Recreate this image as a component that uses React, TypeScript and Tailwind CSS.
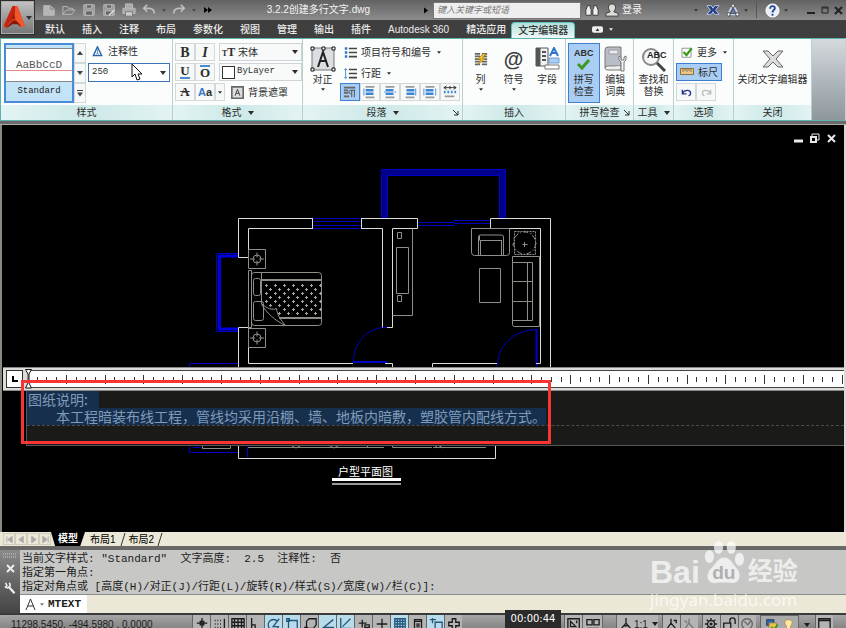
import React from "react";
import clsx from "clsx";

const tabs = [
  "默认",
  "插入",
  "注释",
  "布局",
  "参数化",
  "视图",
  "管理",
  "输出",
  "插件",
  "Autodesk 360",
  "精选应用",
];

interface WithChildren {
  children?: React.ReactNode;
  className?: string;
}

function Caret({ className, small }: { className?: string; small?: boolean }) {
  return (
    <svg
      viewBox="0 0 6 4"
      className={clsx(
        "shrink-0 fill-current",
        small ? "h-[3px] w-[4px]" : "h-[4px] w-[6px]",
        className
      )}
    >
      <path d="M0 0h6L3 4z" />
    </svg>
  );
}

function Icon({
  children,
  className,
  box = "0 0 16 16",
}: WithChildren & { box?: string }) {
  return (
    <svg
      viewBox={box}
      className={clsx("shrink-0", className ?? "h-4 w-4")}
      fill="none"
      stroke="currentColor"
    >
      {children}
    </svg>
  );
}

/* ---------- title bar ---------- */

function Logo() {
  return (
    <button
      aria-label="Application menu"
      className="flex h-[35px] w-[35px] shrink-0 items-center gap-px border border-[#2e2e2e] bg-linear-to-b from-[#c4c4c4] to-[#757575] pl-[3px] shadow-[inset_0_0_0_1px_#aaa]"
    >
      <svg viewBox="0 0 22 26" className="h-[25px] w-[21px]">
        <path d="M9 1h5l8 21-5 1-3-4-5-2-4 2-2 5-4-2z" fill="#e2421c" />
        <path d="M9 1h3l-1 12-5 5-3 6-3-2z" fill="#c42510" />
        <path d="M12 1h2l8 21-5 1-6-10z" fill="#f0572a" />
        <path d="M3 24c3-5 6-8 8-8s5 3 7 7l-4-3H9z" fill="#8c1508" />
        <path d="M10 8l2 6-4 1z" fill="#a31c0c" />
      </svg>
      <Caret className="text-[#333]" />
    </button>
  );
}

function QuickAccess() {
  return (
    <div className="flex items-center gap-[6px] text-[#bdbdbd]">
      <Icon className="h-[14px] w-[14px]">
        <path d="M2 3h8l4 4v7H2z" fill="#b5b5b5" />
        <path d="M10 3v4h4" stroke="#777" />
      </Icon>
      <Icon className="h-[14px] w-[14px]">
        <path d="M1 13V4h5l1 2h5v2M1 13l4-5h10l-4 5z" />
      </Icon>
      <Icon className="h-[14px] w-[14px]">
        <path d="M2 2h12v12H2z" fill="#999" />
        <path d="M5 2h6v4H5zM4 9h8v5H4z" fill="#666" />
      </Icon>
      <Icon className="h-[14px] w-[14px]">
        <path d="M2 2h12v12H2z" fill="#999" />
        <path d="M5 2h6v4H5zM4 9h8v5H4z" fill="#666" />
        <path d="M8 14l6-6" stroke="#ddd" strokeWidth="2" />
      </Icon>
      <Icon className="h-[14px] w-[14px]">
        <path d="M4 6V1h8v5" fill="#aaa" />
        <path d="M1 6h14v6H1z" fill="#aaa" />
        <path d="M4 10h8v5H4z" fill="#ccc" stroke="#777" />
      </Icon>
      <Icon className="h-[14px] w-[14px]">
        <path d="M6 2L2 6l4 4M2 6h6c4 0 6 2 6 6" strokeWidth="2" />
      </Icon>
      <Caret small className="text-[#444]" />
      <Icon className="h-[14px] w-[14px]">
        <path d="M10 2l4 4-4 4M14 6H8c-4 0-6 2-6 6" strokeWidth="2" />
      </Icon>
      <Caret small className="text-[#444]" />
      <svg viewBox="0 0 8 6" className="ml-[2px] h-[6px] w-[8px] fill-black">
        <path d="M0 0l4 3-4 3zM4 0l4 3-4 3z" />
      </svg>
    </div>
  );
}

function TitleBar() {
  return (
    <div className="flex h-[20px] items-center bg-linear-to-b from-[#626262] to-[#8d8d8d] pl-[7px] text-[#333]">
      <QuickAccess />
      <h1 className="ml-auto text-[10px] leading-[18px] text-[#f4f4f4]">
        3.2.2创建多行文字.dwg
      </h1>
      <div className="flex flex-[0_0_476px] items-center">
        <svg
          viewBox="0 0 4 6"
          className="ml-[54px] mr-[5px] h-[7px] w-[4px] fill-black"
        >
          <path d="M0 0l4 3-4 3z" />
        </svg>
        <input
          aria-label="搜索"
          placeholder="键入关键字或短语"
          className="h-[17px] w-[148px] border border-[#777] bg-[#eee] px-[3px] text-[9px] italic leading-[14px] placeholder:text-[#777]"
        />
        <Icon className="ml-1 h-[14px] w-[14px]">
          <path
            d="M3 3h3v3l1 1v7H1V8zM13 3h-3v3L9 7v7h6V8z"
            fill="#eee"
            stroke="#333"
          />
        </Icon>
        <Icon className="ml-[6px] h-[14px] w-[14px]">
          <path
            d="M8 1c3 0 4 2 4 4s-1 4-2 5l5 2v3H1v-3l5-2C5 9 4 7 4 5s1-4 4-4z"
            fill="#ddd"
            stroke="#333"
          />
        </Icon>
        <button className="ml-[3px] text-[10px] leading-[18px] text-[#f4f4f4]">
          登录
        </button>
        <Caret small className="ml-[52px]" />
        <Icon className="ml-2 h-[14px] w-[14px]">
          <path
            d="M1 3h5l2 3 2-3h5l-4 5 4 5h-5l-2-3-2 3H1l4-5z"
            fill="#233f86"
            stroke="#c4d0ee"
          />
        </Icon>
        <Icon className="ml-[6px] h-[14px] w-[14px]">
          <path d="M8 2l6 11H2z" stroke="#c5d0ea" strokeWidth="2" />
          <path d="M8 6l3 6H5z" stroke="#35508f" />
          <circle cx="8" cy="3" r="2" fill="#eee" />
          <circle cx="3" cy="13" r="2" fill="#eee" />
          <circle cx="13" cy="13" r="2" fill="#eee" />
        </Icon>
        <Caret small className="ml-1" />
        <span className="mx-[8px] h-[16px] w-px bg-[#555]" />
        <Icon className="h-[15px] w-[15px]">
          <circle cx="8" cy="8" r="7" fill="#e9eef7" stroke="#fff" />
          <path
            d="M5.500 6c0-4 5-3 5-.5C10.500 7.500 8 7.500 8 10M8 11.500v2"
            stroke="#24488c"
            strokeWidth="2"
          />
        </Icon>
        <Caret small className="ml-1" />
        <Icon className="ml-auto mr-[2px] h-[12px] w-[38px]" box="0 0 38 12">
          <path d="M1 9h8" stroke="#222" strokeWidth="2" />
          <path d="M16 3h6v6h-6zM16 4h6" stroke="#222" />
          <path d="M29 3l7 7M36 3l-7 7" stroke="#222" strokeWidth="2" />
        </Icon>
      </div>
    </div>
  );
}

function TabBar() {
  return (
    <nav className="flex h-[18px] items-end gap-[17px] bg-[#3f3f3f] pl-[10px] text-[10px] font-medium leading-[17px] text-[#ececec]">
      {tabs.map((tab) => (
        <a key={tab} href="#" className="whitespace-nowrap">
          {tab}
        </a>
      ))}
      <a
        href="#"
        aria-current="page"
        className="-ml-[12px] rounded-t-sm border border-b-0 border-[#5fc4bd] bg-linear-to-b from-[#b3dfdb] to-[#eef8f7] px-[6px] leading-[15px] text-[#333]"
      >
        文字编辑器
      </a>
      <button
        aria-label="Minimize ribbon"
        className="flex h-[17px] items-center gap-[6px]"
      >
        <svg viewBox="0 0 12 7" className="h-[7px] w-[11px]">
          <rect width="12" height="7" rx="2" fill="#eee" />
          <path d="M4 5h4L6 2z" fill="#333" />
        </svg>
        <Caret small />
      </button>
    </nav>
  );
}

/* ---------- ribbon ---------- */

interface PanelProps extends WithChildren {
  title: string;
  more?: boolean;
  launcher?: boolean;
}

function Panel({ title, more, launcher, children, className }: PanelProps) {
  return (
    <section
      className={clsx(
        "flex shrink-0 flex-col border-r border-[#b9cfcf]",
        className
      )}
    >
      <div className="flex h-[66px] px-[2px] pt-1">{children}</div>
      <h2 className="relative flex h-[15px] items-center justify-center gap-[6px] bg-linear-to-r from-[#e3f3f3] via-[#cde9e8] to-[#e3f3f3] leading-[14px]">
        {title}
        {more && <Caret />}
        {launcher && (
          <Icon className="absolute right-[3px] h-[6px] w-[6px]" box="0 0 6 6">
            <path d="M0 0l5 5M5 1v4H1" />
          </Icon>
        )}
      </h2>
    </section>
  );
}

function ToolButton({
  children,
  label,
  active,
  className,
}: WithChildren & { label: string; active?: boolean }) {
  return (
    <button
      aria-label={label}
      className={clsx(
        "flex items-center justify-center border",
        active
          ? "border-[#3f7fd0] bg-[#a9cdf3]"
          : "border-[#d3d8da] bg-[#f7f8f8]",
        className ?? "h-[18px] w-[20px]"
      )}
    >
      {children}
    </button>
  );
}

function BigButton({
  icon,
  lines,
  caret,
  active,
  className,
}: {
  icon: React.ReactNode;
  lines: string[];
  caret?: boolean;
  active?: boolean;
  className?: string;
}) {
  return (
    <button
      className={clsx(
        "flex h-[60px] flex-col items-center border leading-[12px]",
        active ? "border-[#3f7fd0] bg-[#a9cdf3]" : "border-transparent",
        className
      )}
    >
      <span className="flex h-[30px] items-center">{icon}</span>
      {lines.map((line) => (
        <span key={line} className="whitespace-nowrap">
          {line}
        </span>
      ))}
      {caret && <Caret small className="mt-[2px]" />}
    </button>
  );
}

function StylePanel() {
  return (
    <Panel title="样式" className="w-[172px]">
      <button className="ml-px flex h-[60px] w-[70px] flex-col border-2 border-[#4a8bd6] bg-[#c3e3f7] font-['Liberation_Mono',monospace]">
        <span className="mt-[3px] flex h-[34px] w-full items-center justify-center border-y border-[#888] bg-linear-to-b from-white from-65% via-[#e58080] via-67% to-white to-70% text-[11px] text-[#555]">
          AaBbCcD
        </span>
        <span className="w-full text-center text-[9px] leading-[19px] text-[#222]">
          Standard
        </span>
      </button>
      <div className="mr-[3px] flex w-[12px] flex-col text-[#444]">
        <ToolButton label="上一样式" className="h-[20px]">
          <Caret className="rotate-180" />
        </ToolButton>
        <ToolButton label="下一样式" className="h-[20px]">
          <Caret />
        </ToolButton>
        <ToolButton label="全部样式" className="h-[20px]">
          <Icon className="h-[7px] w-[6px]" box="0 0 6 7">
            <path d="M0 .5h6" />
            <path d="M0 2.500h6l-3 4z" fill="currentColor" stroke="none" />
          </Icon>
        </ToolButton>
      </div>
      <div className="relative -ml-px flex flex-1 flex-col">
        <button className="flex h-[20px] items-center gap-[5px] pb-[4px] pl-1">
          <Icon className="h-[11px] w-[11px]">
            <path d="M8 1l6 13H2z" stroke="#2a62ad" strokeWidth="2" />
            <path d="M8 5v5l-3 4M8 10l3 4" stroke="#2a62ad" />
          </Icon>
          注释性
        </button>
        <select
          aria-label="文字高度"
          className="h-[19px] w-full appearance-none border border-[#3c74b8] bg-white pl-[3px] font-['Liberation_Mono',monospace] text-[9px]"
        >
          <option>250</option>
        </select>
        <Caret className="pointer-events-none absolute right-1 top-[28px] text-[#333]" />
        <svg
          viewBox="0 0 11 18"
          className="pointer-events-none absolute left-[43px] top-[20px] h-[18px] w-[11px]"
        >
          <path d="M1 1v13l3-3 2 6 3-1-2-5h4z" fill="#fff" stroke="#111" />
        </svg>
      </div>
    </Panel>
  );
}

function SelectBox({
  label,
  value,
  icon,
  mono,
}: {
  label: string;
  value: string;
  icon: React.ReactNode;
  mono?: boolean;
}) {
  return (
    <label className="relative flex h-[18px] w-[83px] items-center gap-[2px] border border-[#cdd3d6] bg-[#f8f9f9] pl-[2px]">
      {icon}
      <select
        aria-label={label}
        className={clsx(
          "w-full appearance-none",
          mono && "font-['Liberation_Mono',monospace] text-[9px]"
        )}
      >
        <option>{value}</option>
      </select>
      <Caret className="pointer-events-none absolute right-[3px]" />
    </label>
  );
}

function FormatPanel() {
  return (
    <Panel title="格式" more className="w-[130px]">
      <div className="flex flex-col gap-[2px] font-['Liberation_Serif','Noto_Sans_CJK_SC',serif]">
        <div className="flex">
          <ToolButton label="粗体">
            <b className="text-[14px]">B</b>
          </ToolButton>
          <ToolButton label="斜体">
            <i className="text-[14px] font-bold">I</i>
          </ToolButton>
          <span className="w-1" />
          <SelectBox
            label="字体"
            value="宋体"
            icon={
              <span className="flex w-[14px] shrink-0 items-baseline">
                <b className="text-[8px]">T</b>
                <b className="text-[12px]">T</b>
              </span>
            }
          />
        </div>
        <div className="flex">
          <ToolButton label="下划线">
            <span className="border-b-2 border-[#4a8bd6] text-[13px] font-bold leading-[12px]">
              U
            </span>
          </ToolButton>
          <ToolButton label="上划线">
            <span className="border-t-2 border-[#4a8bd6] text-[13px] font-bold leading-[12px]">
              O
            </span>
          </ToolButton>
          <span className="w-1" />
          <SelectBox
            label="颜色"
            value="ByLayer"
            mono
            icon={
              <span className="h-[13px] w-[13px] shrink-0 border border-[#333] bg-white" />
            }
          />
        </div>
        <div className="flex">
          <ToolButton label="删除线">
            <span className="text-[13px] font-bold leading-[12px] line-through">
              A
            </span>
          </ToolButton>
          <ToolButton label="大小写">
            <b className="font-['Liberation_Sans',sans-serif] text-[11px]">
              <span className="text-[#2f78c8]">A</span>a
            </b>
          </ToolButton>
          <ToolButton label="大小写选项" className="h-[18px] w-[10px]">
            <Caret small />
          </ToolButton>
          <button className="ml-[6px] flex items-center gap-[4px]">
            <Icon className="h-[13px] w-[13px]">
              <path d="M1 1h14v14H1z" fill="#ddd" stroke="#666" strokeWidth="2" />
              <path d="M5 12l3-8 3 8M6 9h4" />
            </Icon>
            背景遮罩
          </button>
        </div>
      </div>
    </Panel>
  );
}

function AlignIcon({ accent, left = 3 }: { accent: string; left?: number }) {
  return (
    <Icon className="h-[14px] w-[14px]">
      <path d="M3 2h10M3 14h10" stroke="#999" strokeWidth="2" />
      <path d={`M${left} 6h9M${left} 10h9`} stroke="#3c86d6" strokeWidth="3" />
      <path d={accent} stroke="#3c86d6" />
    </Icon>
  );
}

function ListIcon({ children }: WithChildren) {
  return (
    <Icon className="h-[13px] w-[13px]">
      <path d="M6 3h10M6 8h10M6 13h10" stroke="#444" strokeWidth="2" />
      {children}
    </Icon>
  );
}

function ParagraphPanel() {
  return (
    <Panel title="段落" more launcher className="w-[160px]">
      <BigButton
        caret
        className="w-[36px]"
        lines={["对正"]}
        icon={
          <Icon className="h-[26px] w-[26px]" box="0 0 26 26">
            <path d="M2 2h22v22H2z" fill="#dcdfe1" stroke="#777" />
            <path
              d="M8 21l5-15 5 15M10 15h7"
              strokeWidth="2"
              stroke="#222"
            />
            <path
              d="M1 1h3v3H1zM12 1h3v3h-3zM22 1h3v3h-3zM1 22h3v3H1zM22 22h3v3h-3z"
              fill="#fff"
              stroke="#111"
            />
          </Icon>
        }
      />
      <div className="flex flex-col">
        <button className="flex h-[20px] items-center gap-1 whitespace-nowrap pb-[2px] pl-1">
          <ListIcon>
            <path d="M1 3h3M1 8h3M1 13h3" stroke="#2a76c8" strokeWidth="3" />
          </ListIcon>
          项目符号和编号
          <Caret small className="ml-[2px]" />
        </button>
        <button className="flex h-[20px] items-center gap-1 pl-1">
          <ListIcon>
            <path d="M2 2v12M0 4l2-2 2 2M0 12l2 2 2-2" stroke="#2a76c8" />
          </ListIcon>
          行距
          <Caret small className="ml-[2px]" />
        </button>
        <div className="flex">
          <ToolButton label="默认对正" active>
            <Icon className="h-[14px] w-[14px]">
              <path
                d="M1 3h13M1 6h5M1 9h5M1 13h6"
                stroke="#666"
                strokeWidth="2"
              />
              <path d="M10 14V6M13 14V6M14 6h-5c-3 0-3 4 0 4" stroke="#444" />
            </Icon>
          </ToolButton>
          <ToolButton label="左对齐">
            <AlignIcon accent="M1 4v8" />
          </ToolButton>
          <ToolButton label="居中">
            <AlignIcon accent="M1 8h2M13 8h2" />
          </ToolButton>
          <ToolButton label="右对齐">
            <AlignIcon accent="M14.500 4v8" left={4} />
          </ToolButton>
          <ToolButton label="对正段落">
            <AlignIcon accent="M1 4v8M14.500 4v8" />
          </ToolButton>
          <ToolButton label="分布">
            <Icon className="h-[14px] w-[14px]">
              <path d="M1 3h14M4 1L1 3l3 2M12 1l3 2-3 2M8 1v4" stroke="#222" />
              <path
                d="M1 8h2M5 8h2M9 8h2M13 8h2"
                stroke="#3c86d6"
                strokeWidth="3"
              />
              <path d="M2 13h11" stroke="#999" strokeWidth="2" />
            </Icon>
          </ToolButton>
        </div>
      </div>
    </Panel>
  );
}

function InsertPanel() {
  return (
    <Panel title="插入" className="w-[103px]">
      <BigButton
        caret
        className="w-[31px]"
        lines={["列"]}
        icon={
          <Icon className="h-[16px] w-[14px]">
            <path
              d="M1 2h6M1 5h6M1 8h6M1 11h6M1 14h6M9 2h6M9 5h6M9 8h6M9 11h6M9 14h6"
              stroke="#666"
              strokeWidth="2"
            />
            <path
              d="M11 2l-7 6h4l-3 6 8-7H9l4-4z"
              fill="#f4c724"
              stroke="#b58a1a"
            />
          </Icon>
        }
      />
      <BigButton
        caret
        className="w-[35px]"
        lines={["符号"]}
        icon={<b className="text-[20px] text-[#3c3c3c]">@</b>}
      />
      <BigButton
        className="w-[32px]"
        lines={["字段"]}
        icon={
          <Icon className="h-[24px] w-[25px]" box="0 0 25 24">
            <path d="M1 1h4v18H1z" fill="#555" stroke="#555" />
            <path d="M5 1h8v18H5z" fill="#f1f2f3" stroke="#555" />
            <path d="M7 5h4M7 9h4M7 13h4" stroke="#555" strokeWidth="2" />
            <path
              d="M15 9l4-8 4 8M16 6h6"
              stroke="#2f78c8"
              strokeWidth="2"
            />
            <path d="M14 11h10v5H14z" fill="#a9cdf3" stroke="#6f9ecf" />
            <path d="M10 18h14v4H10z" fill="#fff" stroke="#777" />
          </Icon>
        }
      />
    </Panel>
  );
}

function RibbonEnd() {
  return (
    <>
      <Panel title="拼写检查" launcher className="w-[68px]">
        <BigButton
          active
          className="w-[32px]"
          lines={["拼写", "检查"]}
          icon={
            <span className="flex flex-col items-center">
              <b className="text-[9px] leading-[10px]">ABC</b>
              <Icon className="h-[13px] w-[15px]" box="0 0 15 13">
                <path d="M2 6l4 4 7-8" stroke="#3c9a22" strokeWidth="3" />
              </Icon>
            </span>
          }
        />
        <BigButton
          className="w-[32px]"
          lines={["编辑", "词典"]}
          icon={
            <Icon className="h-[26px] w-[23px]" box="0 0 23 26">
              <path
                d="M4 1h13v19H4q-3 0-3 2V4q0-3 3-3z"
                fill="#b9bdc5"
                stroke="#777"
              />
              <path d="M1 22q0 2 3 2h13v-4" fill="#eee" stroke="#777" />
              <path d="M5 4h9v4H5z" fill="#e6e9f0" stroke="#999" />
              <path
                d="M15 10v4l2 2v9h3v-9l2-2v-4l-2 1v3h-3v-3z"
                fill="#f2f2f2"
                stroke="#777"
              />
            </Icon>
          }
        />
      </Panel>
      <Panel title="工具" more className="w-[40px]">
        <BigButton
          className="w-[35px]"
          lines={["查找和", "替换"]}
          icon={
            <Icon className="h-[26px] w-[26px]" box="0 0 26 26">
              <circle
                cx="10"
                cy="11"
                r="8"
                fill="#f4f6f8"
                stroke="#888"
                strokeWidth="2"
              />
              <path d="M16 17l8 8" stroke="#444" strokeWidth="3" />
              <text
                x="6"
                y="12"
                fontSize="9"
                fontWeight="bold"
                fill="#222"
                stroke="none"
              >
                ABC
              </text>
            </Icon>
          }
        />
      </Panel>
      <Panel title="选项" className="w-[60px]">
        <div className="flex flex-col items-start">
          <button className="flex h-[20px] items-center gap-1 whitespace-nowrap pb-[2px] pl-1">
            <Icon className="h-[12px] w-[13px]">
              <path d="M2 3h12v12H2z" fill="#fff" stroke="#777" />
              <path d="M4 8l4 4 7-9" stroke="#3c9a22" strokeWidth="3" />
            </Icon>
            更多
            <Caret small className="ml-[2px]" />
          </button>
          <button className="flex h-[18px] items-center gap-1 border border-[#3f7fd0] bg-[#a9cdf3] px-[3px]">
            <Icon className="h-[8px] w-[14px]" box="0 0 14 8">
              <path d="M.5 .5h13v6H.5z" fill="#e9c98b" stroke="#8b7040" />
              <path d="M3 1v3M5 1v2M7 1v3M9 1v2M11 1v3" stroke="#8b7040" />
            </Icon>
            标尺
          </button>
          <div className="mt-[2px] flex">
            <ToolButton label="放弃">
              <Icon className="h-[11px] w-[11px]">
                <path
                  d="M2 4v6h6M2 9c4-6 12-5 12 0 0 2-1 3-3 4"
                  stroke="#27328f"
                  strokeWidth="2"
                />
              </Icon>
            </ToolButton>
            <ToolButton label="重做">
              <Icon className="h-[11px] w-[11px]">
                <path
                  d="M14 4v6H8M14 9C10 3 2 4 2 9c0 2 1 3 3 4"
                  stroke="#bbb"
                  strokeWidth="2"
                />
              </Icon>
            </ToolButton>
          </div>
        </div>
      </Panel>
      <Panel title="关闭" className="w-[78px]">
        <BigButton
          className="w-full"
          lines={["关闭文字编辑器"]}
          icon={
            <Icon className="h-[18px] w-[22px]" box="0 0 22 18">
              <path
                d="M1 1h5l5 5 5-5h5l-7 8 7 8h-5l-5-5-5 5H1l7-8z"
                fill="#ddd"
                stroke="#666"
              />
            </Icon>
          }
        />
      </Panel>
    </>
  );
}

function Ribbon() {
  return (
    <div className="flex border border-y-[#5fb3ae] border-l-[#5fb3ae] border-r-[#ccc] bg-[#fbfdfd] text-[10px] text-[#2d2d2d]">
      <StylePanel />
      <FormatPanel />
      <ParagraphPanel />
      <InsertPanel />
      <RibbonEnd />
      <div className="flex-1 bg-linear-to-b from-[#d5dade] to-[#8e979d]" />
    </div>
  );
}

/* ---------- drawing area ---------- */

function bedPattern() {
  let d = "";
  for (let row = 0; row < 8; row++) {
    for (let col = 0; col < 7; col++) {
      const x = 266 + col * 9 + (row % 2 ? 4 : 0);
      const y = 285 + row * 4;
      if (x > 320 || (x < 278 && y > 306)) continue;
      d += `M${x - 1} ${y + 0.5}h3M${x + 0.5} ${y - 1}v3`;
    }
  }
  return d;
}

function Nightstand({ y }: { y: number }) {
  return (
    <g>
      <path d={`M248.500 ${y}h17v19h-17z`} />
      <circle cx="257" cy={y + 9.5} r="4" />
      <path
        d={`M250 ${y + 9.5}h5M259 ${y + 9.5}h5M257 ${y + 3}v5M257 ${y + 11}v5`}
      />
    </g>
  );
}

function FloorPlan() {
  return (
    <svg
      viewBox="0 125 846 407"
      className="h-[407px] w-[846px] max-w-none"
      fill="none"
      aria-label="户型平面图"
    >
      {/* windows, balcony and doors */}
      <g stroke="#0000c8">
        <path
          d="M384.500 218V172.500H502.500V218"
          stroke="#00008c"
          strokeWidth="6"
        />
        <path d="M381.500 218V169.500H505.500V218M387.500 218V175.500H499.500V218" />
        <path d="M312 218.500h50M312 221.500h50M312 225.500h50M312 228.500h50" />
        <path d="M417 222.500h37v-2h37M417 225.500h37v-2h37" />
        <path d="M238 253.500H216.500V331.500H238" />
        <path
          d="M238 256H219.500V329H238"
          strokeWidth="3"
          stroke="#0000e0"
        />
        <path d="M353.500 363c0-20 12-33 29-35.500h6M353 361.500h34" />
        <path d="M353 362h34" strokeWidth="2" />
        <path d="M497.500 366c0-20 15-36 40-36.500" />
        <path d="M536.500 330v36" strokeWidth="2" />
        <path d="M189.500 367v-3.500H238M189.500 445v7.500H238M193 447.500h8M247.500 446v12" />
      </g>
      {/* walls */}
      <g stroke="#dcdcd4">
        <path d="M312.500 218.500H238.500V257.500H248.500V228.500H312.500M361.500 218.500H417.500V228.500H392.500V327.500H387" />
        <path d="M361.500 228.500H382.500V327.500M312.500 218v11M361.500 218v11" />
        <path d="M490.500 218.500v10H540.500V363.500H536M490.500 218.500H550.500V367" />
        <path d="M238.500 367V327.500H248.500V363.500H353M385 363.500h7.500v4M432.500 367v-3.500H497" />
        <path d="M238.500 446V458.500H495.500V446" />
        <path
          d="M248 447.500H384M392.500 446v1.500H432M433 447.500h53"
          stroke="#8a8a84"
        />
        <path d="M202.500 446v2.500h28v-2.500" stroke="#8a8a84" />
        <path
          d="M292 446l4 2 4-2M330 446l4 2 4-2M367.500 446v2M434 448l4-3 5 3"
          stroke="#8a8a84"
        />
      </g>
      {/* furniture */}
      <g stroke="#8f8f89">
        <Nightstand y={249.5} />
        <Nightstand y={328.5} />
        <path d="M248.500 270.500h3v57h-3z" />
        <rect x="251.500" y="272.500" width="70" height="53" rx="3" />
        <path d="M262 280h60M279 318h43" strokeWidth="2" />
        <rect x="253.500" y="278.500" width="7" height="17" rx="2" />
        <rect x="253.500" y="301.500" width="10" height="19" rx="2" />
        <path d="M261.500 273v31c4 8 14 17 24 21.500-4-5-8-9-9-17-4 2-10 0-15-5" />
        <path d={bedPattern()} stroke="#a5a59f" />
        <path d="M392.500 315.500h20v-87M396.500 247.500h12v46h-12zM397.500 232.500h4v6h-4zM397.500 295.500h4v6h-4z" />
        <path d="M479.500 268.500h21v34h-21z" />
        <path d="M471.500 228.500h38v24q0 3-3 3h-32q-3 0-3-3z" />
        <path d="M478.500 255v-18q0-2 2-2h21q2 0 2 2v18M480 240.500h22M479.500 235.500v5M501.500 240.500v15M480.500 240.500v15" />
        <path d="M512.500 256.500h27v70h-25q-2 0-2-2zM512.500 262.500h20v58h-20M527.500 262.500v58M512.500 281.500h20M512.500 301.500h20" />
        <path d="M514.500 231.500h21v23h-21z" strokeDasharray="2 1" />
        <circle cx="524.500" cy="243" r="11" strokeDasharray="5 2 1 2" />
        <circle cx="524.500" cy="243" r="12" strokeDasharray="1 6" />
        <path d="M522.500 244.500h5M524.500 242v5" />
      </g>
      <text
        x="338"
        y="476"
        fontSize="11"
        fill="#fff"
        fontFamily="'Noto Sans CJK SC', sans-serif"
      >
        户型平面图
      </text>
      <path d="M332 479.500h69" stroke="#fff" strokeWidth="3" />
      <path d="M332 484h69" stroke="#999" strokeWidth="2" />
    </svg>
  );
}

function rulerTicks() {
  let d = "";
  for (let i = 1; i < 200; i++) {
    const x = Math.round(i * 9.7);
    d += i % 4 === 0 ? `M${x + 0.5} 4v9` : `M${x + 0.5} 6v5`;
  }
  return d;
}

function TextEditor() {
  return (
    <div className="relative">
      <div className="flex h-[24px] items-center border-y border-[#888] bg-[#dcdcd8] pl-[3px]">
        <div className="flex h-[18px] w-[17px] items-center justify-center border border-[#333] bg-white">
          <Icon className="h-[6px] w-[6px]" box="0 0 6 6">
            <path d="M1 0v5h5" stroke="#000" strokeWidth="2" />
          </Icon>
        </div>
        <div className="ml-[4px] h-[18px] min-w-0 flex-1 overflow-hidden border-y border-[#444] bg-white">
          <svg className="h-[16px] w-full" stroke="#333">
            <path d={rulerTicks()} />
          </svg>
        </div>
      </div>
      <div
        role="textbox"
        aria-label="多行文字"
        className="ml-[23px] flex h-[55px] flex-col items-start border-b border-l border-[#555] bg-[#1a1a19] font-['Noto_Sans_CJK_SC',sans-serif] text-[14px] leading-[17px] text-[#7f9bbb]"
      >
        <span className="w-[72px] bg-[#162f4c] pl-px">图纸说明:</span>
        <div className="w-full border-b border-dashed border-[#4c4c4c]">
          <span className="inline-block whitespace-nowrap bg-[#162f4c] pl-[29px] align-top">
            本工程暗装布线工程，管线均采用沿棚、墙、地板内暗敷，塑胶管内配线方式。
          </span>
        </div>
      </div>
      <svg
        viewBox="0 0 7 20"
        className="absolute left-[22px] top-[2px] h-[20px] w-[7px]"
        fill="#fff"
        stroke="#111"
      >
        <path d="M.5 .5h6L4 5v9l2.500 5h-6L3 14V5z" />
      </svg>
    </div>
  );
}

function Canvas() {
  return (
    <main className="relative min-h-[407px] flex-1 overflow-hidden border-l-2 border-r-2 border-l-[#8a8a82] border-r-[#d8d8d8] bg-black">
      <div className="absolute -left-[2px] top-0">
        <FloorPlan />
      </div>
      <Icon
        className="absolute right-2 top-[8px] h-[11px] w-[43px] text-[#e8e8e8]"
        box="0 0 43 11"
      >
        <path d="M1 8h9" strokeWidth="3" />
        <path d="M19 3V1h7v6h-2" />
        <path d="M18 4h5v5h-5z" strokeWidth="2" />
        <path d="M35 2l7 7M42 2l-7 7" strokeWidth="2" />
      </Icon>
      <div className="absolute left-px right-0 top-[242px]">
        <TextEditor />
      </div>
      <div className="absolute left-[19px] top-[255px] h-[64px] w-[530px] border-3 border-[#f93434]" />
    </main>
  );
}

/* ---------- command line and status bar ---------- */

const scrollArrows = [
  { name: "首个布局", d: "M2 1v7M8 1v7L3 4.500z" },
  { name: "上一布局", d: "M7 1v7L2 4.500z" },
  { name: "下一布局", d: "M3 1v7l5-3.500z" },
  { name: "末个布局", d: "M8 1v7M2 1v7l5-3.500z" },
];

function Slash() {
  return (
    <svg viewBox="0 0 6 13" className="h-[13px] w-[6px]" stroke="#333">
      <path d="M1 13L5 0" />
    </svg>
  );
}

function LayoutTabs() {
  return (
    <div className="flex h-[14px] items-center bg-[#ebe8d7] pl-[3px] text-[10px] leading-[13px] text-black">
      {scrollArrows.map(({ name, d }) => (
        <button
          key={name}
          aria-label={name}
          className="flex h-[12px] w-[12px] items-center justify-center border border-[#d0cdbb]"
        >
          <svg
            viewBox="0 0 10 9"
            className="h-[9px] w-[9px]"
            fill="#aaa"
            stroke="#aaa"
          >
            <path d={d} />
          </svg>
        </button>
      ))}
      <a
        href="#"
        className="h-[14px] bg-black px-[7px] font-bold text-white [clip-path:polygon(0_0,100%_0,86%_100%,12%_100%)]"
      >
        模型
      </a>
      <a href="#" className="pl-[5px] pr-[4px]">
        布局1
      </a>
      <Slash />
      <a href="#" className="px-[3px]">
        布局2
      </a>
      <Slash />
    </div>
  );
}

function CommandLine() {
  return (
    <div className="flex border-t-4 border-[#686868]">
      <div className="flex w-[20px] flex-col items-center gap-[6px] bg-linear-to-b from-[#8a8a8a] to-[#444] pt-[3px] text-[#eee]">
        <Icon className="h-[5px] w-[14px]" box="0 0 14 5">
          <path d="M0 1h14M0 4h14" strokeDasharray="1 1" stroke="#ccc" />
        </Icon>
        <Icon className="h-[9px] w-[9px]" box="0 0 9 9">
          <path d="M1 1l7 7M8 1L1 8" strokeWidth="2" />
        </Icon>
        <Icon className="mt-[3px] h-[12px] w-[12px]">
          <path d="M6 6l8 9" strokeWidth="3" />
          <path d="M2 1l2 4-3 2M7 1c3 4 0 8-5 6" strokeWidth="2" />
        </Icon>
      </div>
      <div className="min-w-0 flex-1 font-['Liberation_Mono','Noto_Sans_CJK_SC',monospace] text-[11px] text-[#1c1c1c]">
        <div className="h-[45px] whitespace-pre border-b border-[#8a8a8a] bg-[#c7c7c5] pl-[2px] pt-[2px] leading-[14px]">
          <p>
            {'当前文字样式: "Standard"  文字高度:  2.5  注释性:  否'}
          </p>
          <p>指定第一角点:</p>
          <p>
            指定对角点或 [高度(H)/对正(J)/行距(L)/旋转(R)/样式(S)/宽度(W)/栏(C)]:
          </p>
        </div>
        <div className="flex h-[18px] bg-[#ebe8d7]">
          <label className="flex w-[67px] items-center gap-1 bg-white pl-[5px]">
            <Icon className="h-[12px] w-[11px]" box="0 0 11 12">
              <path d="M1 12L5.500 1 10 12M2.500 8h6" stroke="#333" />
            </Icon>
            <Caret small className="text-[#777]" />
            <input
              aria-label="命令"
              defaultValue="MTEXT"
              className="w-[38px] min-w-0 bg-transparent font-bold"
            />
          </label>
        </div>
      </div>
    </div>
  );
}

const statusTools = [
  { name: "捕捉", on: false, d: "M2 7h12M8 1v12M6 5h4v4H6z" },
  { name: "点栅格", on: false, d: "M2 4h1M5 4h1M8 4h1M2 8h1M5 8h1M8 8h1M2 12h1M5 12h1M8 12h1M13 2v12H2" },
  { name: "栅格", on: false, d: "M1 2h14v12H1zM4 2v12M8 2v12M12 2v12M1 6h14M1 10h14" },
  { name: "正交", on: false, d: "M3 1v13h11M3 9h4v5" },
  { name: "极轴", on: true, d: "M12 5a6 6 0 1 0 1 6H7l7-9" },
  { name: "对象捕捉", on: true, d: "M4 4h10v10H4zM2 2h3v3H2z" },
  { name: "三维捕捉", on: false, d: "M4 5l3-3h8v7l-3 4H4zM2 12h3v3H2z" },
  { name: "对象追踪", on: true, d: "M14 3L3 12h12" },
  { name: "动态 UCS", on: true, d: "M2 1v12h12M4 11l9-9" },
  { name: "动态输入", on: false, d: "M2 7h9M6 3v9M9 9h5v3H9z" },
  { name: "线宽", on: false, d: "M2 8h12M8 2v12" },
  { name: "透明度", on: true, d: "M2 2h12v12H2zM5 2v12M8 2v12M11 2v12M2 5h12M2 8h12M2 11h12" },
  { name: "快捷特性", on: false, d: "M4 3h8v11H4zM4 5h8M7 7v5M9 7v5" },
  { name: "选择循环", on: true, d: "M1 3h7M4 1v6M7 6h8v9H7z" },
  { name: "注释监视器", on: false, d: "M6 2h4v4h4v4h-4v4H6v-4H2V6h4z" },
];

function StatusButton({
  name,
  d,
  on,
  className,
}: {
  name: string;
  d: string;
  on?: boolean;
  className?: string;
}) {
  return (
    <button
      aria-label={name}
      className={clsx(
        "flex h-[18px] shrink-0 items-center justify-center border-l border-[#666]",
        on ? "bg-[#b9dcea] text-[#24577c]" : "bg-[#b4b4b4]",
        className ?? "w-[18px]"
      )}
    >
      <Icon className="h-[14px] w-[14px]">
        <path d={d} strokeWidth="1.500" />
      </Icon>
    </button>
  );
}

function StatusBar() {
  return (
    <footer className="flex h-[15px] overflow-hidden border-t-2 border-[#3a3a3a] bg-linear-to-b from-[#a5a5a5] to-[#858585] text-[10px] leading-[19px] text-[#1c1c1c]">
      <span className="w-[192px] shrink-0 pl-[11px]">
        11298.5450, -494.5980 , 0.0000
      </span>
      {statusTools.map((tool) => (
        <StatusButton key={tool.name} {...tool} />
      ))}
      <div className="ml-auto flex w-[282px] shrink-0">
        <StatusButton name="模型" d="M1 2h13v12H1zM4 5v6h6zM11 4v3" />
        <StatusButton
          name="快速查看"
          d="M1 3h6v6H1zM9 3h6v6H9zM1 13h14"
          className="w-[20px]"
        />
        <span className="w-[14px] border-l border-[#666]" />
        <StatusButton name="注释比例" d="M8 1v6L2 14M8 7l6 7M5 10h6" />
        <button className="flex h-[18px] items-center gap-1 bg-[#b4b4b4]">
          1:1
          <Caret />
        </button>
        <StatusButton
          name="注释可见性"
          d="M8 2v5l-5 7M8 7l6 7M11 4h3v3"
          className="ml-1 w-[18px]"
        />
        <StatusButton
          name="自动缩放"
          d="M8 2v5l-5 7M8 7l6 7M3 4l3 3"
          className="w-[18px] text-[#777]"
        />
        <StatusButton
          name="切换工作空间"
          d="M8 1v3M8 12v3M1 8h3M12 8h3M3 3l2 2M11 11l2 2M3 13l2-2M11 5l2-2M8 4a4 4 0 1 0 .1 0M8 7a1 1 0 1 0 .1 0"
          className="ml-1 w-[18px]"
        />
        <StatusButton name="锁定" d="M2 7h8v8H2zM9 7V4a3 3 0 0 1 6 0v4" />
        <StatusButton
          name="硬件加速"
          d="M8 2a6 6 0 1 0 .1 0M5 5l4 4 3-4"
          className="w-[18px] text-[#666]"
        />
        <span className="ml-1 flex h-[18px] items-center gap-[5px] border border-[#666] bg-[#aaa] px-1">
          <Icon className="h-[13px] w-[13px]">
            <path d="M2 2h9v7H2z" fill="#2a65b8" stroke="#234" />
            <path d="M5 6h9v7H5z" fill="#e8c53a" stroke="#976" />
            <path d="M8 11l3 3 5-6" stroke="#2c9a1c" strokeWidth="2" />
          </Icon>
          <Icon className="h-[13px] w-[11px]">
            <path
              d="M8 1c7 0 6 6 3 9v4H5v-4C2 7 1 1 8 1z"
              fill="#ffe9a0"
              stroke="#a98a3a"
            />
          </Icon>
        </span>
        <Caret className="mx-[5px] mt-2" />
        <StatusButton name="全屏显示" d="M2 2h13v12H2zM2 4h13" />
      </div>
    </footer>
  );
}

function Watermark() {
  return (
    <div className="pointer-events-none absolute bottom-[16px] right-[44px] w-[152px] text-white/70">
      <div className="mb-[2px] flex h-[48px] items-end whitespace-nowrap font-bold">
        <span className="text-[32px] leading-[28px]">Bai</span>
        <svg
          viewBox="0 0 46 48"
          className="ml-[3px] h-[48px] w-[42px]"
          fill="currentColor"
        >
          <ellipse cx="7" cy="18" rx="5" ry="7" />
          <ellipse cx="17" cy="8" rx="5" ry="7" />
          <ellipse cx="31" cy="8" rx="5" ry="7" />
          <ellipse cx="40" cy="21" rx="5" ry="7" />
          <path d="M23 19c7 0 9 7 14 12 6 7 3 16-5 16-4 0-14-1-18 0-9 1-12-8-6-15 6-5 8-13 15-13z" />
          <text x="10" y="43" fontSize="21" fill="#b0b0b0">
            du
          </text>
        </svg>
        <span className="ml-[3px] text-[25px] leading-[30px]">经验</span>
      </div>
      <p className="font-['Noto_Sans',sans-serif] text-[17px] leading-[24px]">
        jingyan.baidu.com
      </p>
    </div>
  );
}

export default function App() {
  return (
    <div className="relative flex min-h-screen flex-col overflow-hidden bg-[#6b6b6b] font-['Liberation_Sans','Noto_Sans_CJK_SC',sans-serif]">
      <header>
        <div className="flex bg-[#3f3f3f]">
          <Logo />
          <div className="min-w-0 flex-1">
            <TitleBar />
            <TabBar />
          </div>
        </div>
        <Ribbon />
        <div className="h-[4px] border-b border-[#aaa] bg-[#6b6b6b]" />
      </header>
      <Canvas />
      <LayoutTabs />
      <CommandLine />
      <StatusBar />
      <Watermark />
      <time className="absolute bottom-0 left-[505px] h-[18px] w-[56px] bg-[#2b2b2b] text-center font-['DejaVu_Sans',sans-serif] text-[10px] leading-[17px] text-white">
        00:00:44
      </time>
    </div>
  );
}
